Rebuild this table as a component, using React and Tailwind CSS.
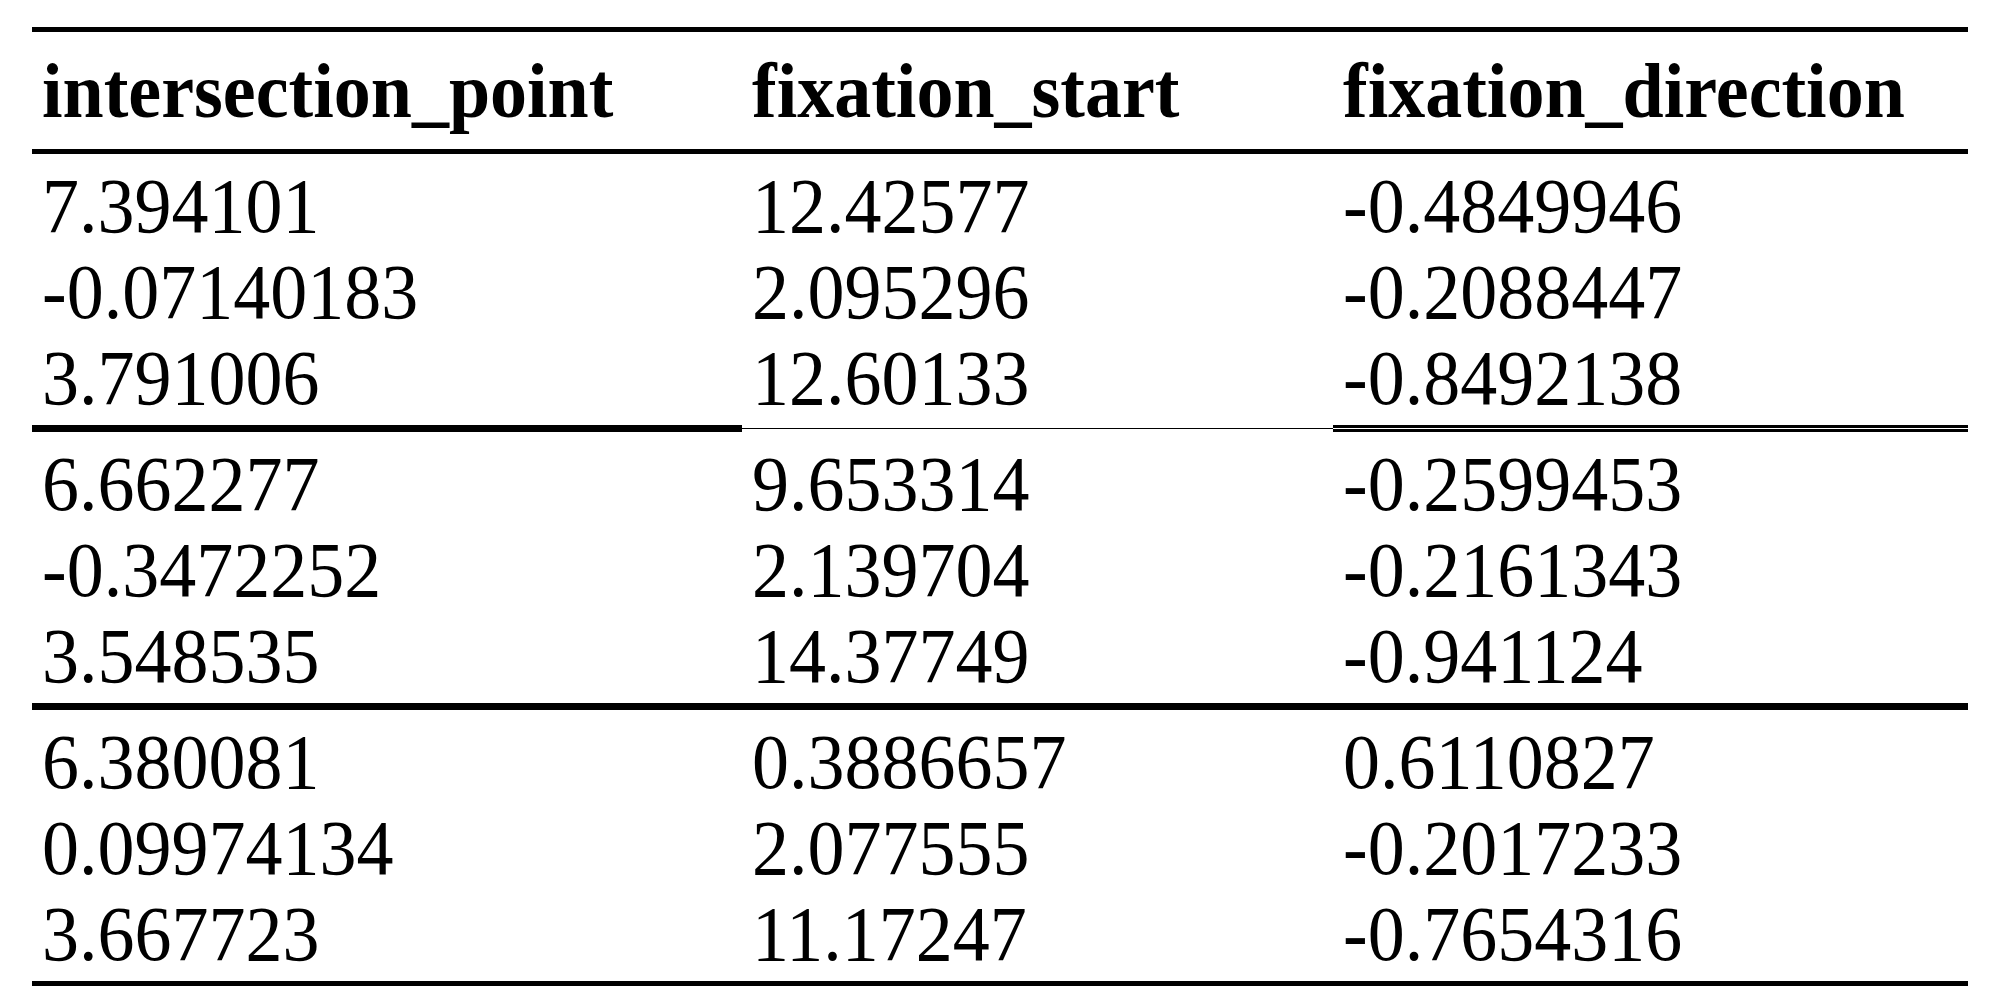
const HEADERS = ['intersection_point', 'fixation_start', 'fixation_direction'];

const GROUPS = [
  [
    ['7.394101', '12.42577', '-0.4849946'],
    ['-0.07140183', '2.095296', '-0.2088447'],
    ['3.791006', '12.60133', '-0.8492138'],
  ],
  [
    ['6.662277', '9.653314', '-0.2599453'],
    ['-0.3472252', '2.139704', '-0.2161343'],
    ['3.548535', '14.37749', '-0.941124'],
  ],
  [
    ['6.380081', '0.3886657', '0.6110827'],
    ['0.09974134', '2.077555', '-0.2017233'],
    ['3.667723', '11.17247', '-0.7654316'],
  ],
];

const COLS = 'grid grid-cols-[710px_591px_1fr]';

function Row({ cells, bold }) {
  return (
    <div className={`${COLS} h-[86px] leading-[86px] ${bold ? 'font-bold' : ''}`}>
      {cells.map((c, i) => (
        <div key={i} className="pl-[10px] whitespace-nowrap">
          {/* the source figure is a little taller than wide */}
          <span className="inline-block origin-[0_68px] scale-y-[1.05]">{c}</span>
        </div>
      ))}
    </div>
  );
}

// first group separator: thick / thin / double, one per column
function MixedRule() {
  return (
    <div className={`${COLS} h-[7px]`}>
      <div className="bg-black" />
      <div className="flex flex-col justify-center">
        <div className="h-px bg-black" />
      </div>
      <div className="flex flex-col">
        <div className="h-[3px] bg-black" />
        <div className="h-px" />
        <div className="h-[3px] bg-black" />
      </div>
    </div>
  );
}

export default function App() {
  return (
    <div className="w-[2002px] h-[1003px] bg-white text-black overflow-hidden font-['Liberation_Serif',serif] text-[74px]">
      <div className="ml-[32px] mt-[27px] w-[1936px]">
        <div className="h-[5px] bg-black" />
        <div className="pt-[17px] pb-[14px]">
          <Row cells={HEADERS} bold />
        </div>
        <div className="h-[5px] bg-black" />

        {GROUPS.map((g, gi) => (
          <div key={gi}>
            <div className="h-[271px] pt-[10px]">
              {g.map((r, ri) => (
                <Row key={ri} cells={r} />
              ))}
            </div>
            {gi === 0 && <MixedRule />}
            {gi === 1 && <div className="h-[7px] bg-black" />}
            {gi === 2 && <div className="h-[5px] bg-black" />}
          </div>
        ))}
      </div>
    </div>
  );
}
